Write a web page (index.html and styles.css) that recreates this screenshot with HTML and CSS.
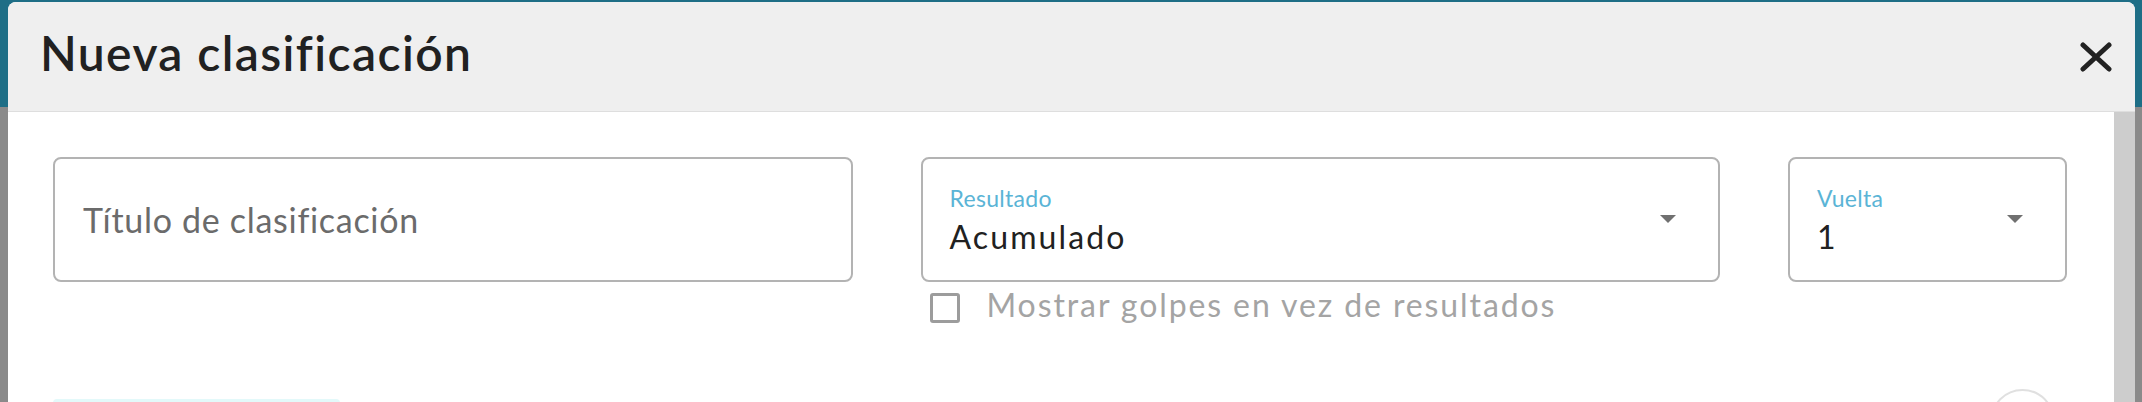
FILE: index.html
```html
<!DOCTYPE html>
<html lang="es">
<head>
  <meta charset="UTF-8" />
  <meta name="viewport" content="width=device-width, initial-scale=1.0"/>
  <title>Nueva clasificación</title>
  <link rel="stylesheet" href="styles.css">
</head>
<body>
  <div class="page-top"></div>

  <div class="modal">
    <div class="modal-header">
      <h2>Nueva clasificación</h2>
      <button class="close-btn" type="button" aria-label="Cerrar">
        <svg width="34" height="30" viewBox="0 0 34 30">
          <path d="M4 3 L30 27 M30 3 L4 27" stroke="#222" stroke-width="5" stroke-linecap="round" fill="none"/>
        </svg>
      </button>
    </div>
    <div class="modal-body">
      <div class="modal-content">
        <div class="form-grid">
          <div class="field field-input">
            <span class="placeholder">Título de clasificación</span>
          </div>
          <div class="field field-select">
            <div class="select-text">
              <span class="select-label">Resultado</span>
              <span class="select-value">Acumulado</span>
            </div>
            <span class="arrow"></span>
          </div>
          <div class="field field-select">
            <div class="select-text">
              <span class="select-label">Vuelta</span>
              <span class="select-value">1</span>
            </div>
            <span class="arrow"></span>
          </div>
          <label class="check-row">
            <span class="check-box"></span>
            <span class="check-label">Mostrar golpes en vez de resultados</span>
          </label>
        </div>
        <div class="actions">
          <div class="action-btn"></div>
          <div class="action-circle"></div>
        </div>
      </div>
      <div class="scroll-track"></div>
    </div>
  </div>
</body>
</html>
```

FILE: styles.css
```css
body {
  margin: 0;
  padding: 0;
  height: 100vh;
  overflow: hidden;
  background-color: #8a8a8a;
  font-family: Lato, "Noto Sans", sans-serif;
}
.page-top {
  height: 107px;
  background-color: #1e6e86;
}
.modal {
  position: absolute;
  left: 8px;
  top: 2px;
  width: 2127px;
  height: 520px;
  background-color: white;
  border-radius: 8px 8px 0 0;
  overflow: hidden;
}
.modal-header {
  display: flex;
  justify-content: space-between;
  align-items: flex-start;
  height: 110px;
  box-sizing: border-box;
  padding: 22px 22px 0 32px;
  background-color: #efefef;
  border-bottom: 1px solid #dedede;
}
.modal-header h2 {
  margin: 0;
  font-size: 48px;
  line-height: 58px;
  font-weight: 600;
  letter-spacing: 1.4px;
  color: #212121;
}
.close-btn {
  margin-top: 18px;
  padding: 0;
  border: none;
  background: none;
  line-height: 0;
  cursor: pointer;
}
.modal-body {
  display: flex;
  height: 410px;
}
.modal-content {
  flex: 1;
  padding: 45px 47px 0 45px;
}
.scroll-track {
  width: 21px;
  background-color: #cdcdcd;
}
.form-grid {
  display: grid;
  grid-template-columns: 1fr 1fr 279px;
  column-gap: 68px;
}
.field {
  height: 125px;
  box-sizing: border-box;
  border: 2px solid #b3b3b3;
  border-radius: 8px;
  display: flex;
  align-items: center;
}
.field-input {
  padding: 0 28px;
}
.placeholder {
  font-size: 34px;
  line-height: 40px;
  letter-spacing: 0.7px;
  color: #6b6b6b;
}
.field-select {
  justify-content: space-between;
  align-items: flex-start;
  padding: 25px 42px 0 27px;
}
.select-text {
  display: flex;
  flex-direction: column;
}
.select-label {
  font-size: 23px;
  line-height: 28px;
  letter-spacing: 0.3px;
  color: #5ab4d6;
}
.select-value {
  margin-top: 6px;
  font-size: 32px;
  line-height: 38px;
  letter-spacing: 2.1px;
  color: #212121;
}
.arrow {
  margin-top: 31px;
  width: 0;
  height: 0;
  border-left: 8px solid transparent;
  border-right: 8px solid transparent;
  border-top: 8px solid #707070;
}
.check-row {
  grid-column: 2;
  display: flex;
  align-items: flex-start;
  margin-top: 8px;
  padding-left: 9px;
}
.check-box {
  width: 30px;
  height: 30px;
  box-sizing: border-box;
  margin-top: 3px;
  border: 3px solid #9c9c9c;
  border-radius: 3px;
}
.check-label {
  margin-left: 27px;
  font-size: 32px;
  line-height: 30px;
  letter-spacing: 1.9px;
  color: #a4a4a4;
}
.actions {
  display: flex;
  justify-content: space-between;
  align-items: flex-start;
  margin-top: 66px;
}
.action-btn {
  margin-top: 10px;
  width: 287px;
  height: 60px;
  background-color: #e3f9fa;
  border-radius: 4px;
}
.action-circle {
  margin-right: 12px;
  width: 65px;
  height: 65px;
  box-sizing: border-box;
  border: 2px solid #e0e0e0;
  border-radius: 50%;
}
```
